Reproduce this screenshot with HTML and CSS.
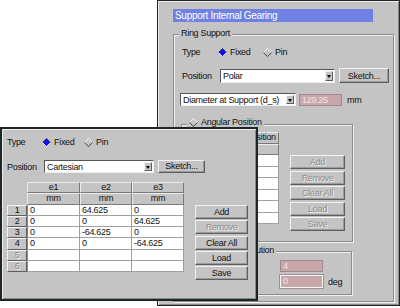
FILE: index.html
```html
<!DOCTYPE html>
<html lang="en">
<head>
  <meta charset="UTF-8" />
  <title>Support Internal Gearing</title>
  <link rel="stylesheet" href="styles.css">
</head>
<body>
  <div class="window back">
    <div class="title">Support Internal Gearing</div>

    <div class="group ring">
      <span class="legend">Ring Support</span>

      <div class="row type-row">
        <span class="label">Type</span>
        <span class="radio first">
          <svg class="dia" viewBox="0 0 10 10"><polygon points="5,0.5 9.5,5 5,9.5 0.5,5" fill="#1010e8"/><polyline points="0.5,5 5,0.5 9.5,5" fill="none" stroke="#3a3a3a"/><polyline points="9.5,5 5,9.5 0.5,5" fill="none" stroke="#f4f4f4"/></svg>
          Fixed
        </span>
        <span class="radio">
          <svg class="dia" viewBox="0 0 10 10"><polygon points="5,0.5 9.5,5 5,9.5 0.5,5" fill="#c4c4c4"/><polyline points="0.5,5 5,0.5 9.5,5" fill="none" stroke="#f8f8f8"/><polyline points="9.5,5 5,9.5 0.5,5" fill="none" stroke="#3a3a3a"/></svg>
          Pin
        </span>
      </div>

      <div class="row pos-row">
        <span class="label">Position</span>
        <div class="combo">Polar<span class="arrow"></span></div>
        <button class="btn sketch">Sketch...</button>
      </div>

      <div class="row dia-row">
        <div class="combo">Diameter at Support (d_s)<span class="arrow"></span></div>
        <div class="field">129.25</div>
        <span class="unit">mm</span>
      </div>

      <div class="group angular">
        <span class="legend">
          <svg class="dia" viewBox="0 0 10 10"><polygon points="5,0.5 9.5,5 5,9.5 0.5,5" fill="#c4c4c4"/><polyline points="0.5,5 5,0.5 9.5,5" fill="none" stroke="#f8f8f8"/><polyline points="9.5,5 5,9.5 0.5,5" fill="none" stroke="#3a3a3a"/></svg>
          Angular Position
        </span>
        <div class="row table-area">
          <div class="grid polar">
            <div class="corner"></div><div class="hd"></div><div class="hd">Position</div>
            <div class="corner"></div><div class="hd"></div><div class="hd"></div>
            <div class="rh"></div><div class="cell"></div><div class="cell"></div>
            <div class="rh"></div><div class="cell"></div><div class="cell"></div>
            <div class="rh"></div><div class="cell"></div><div class="cell"></div>
            <div class="rh"></div><div class="cell"></div><div class="cell"></div>
            <div class="rh"></div><div class="cell"></div><div class="cell"></div>
            <div class="rh"></div><div class="cell"></div><div class="cell"></div>
          </div>
          <div class="buttons">
            <button class="btn off">Add</button>
            <button class="btn off">Remove</button>
            <button class="btn off">Clear All</button>
            <button class="btn off">Load</button>
            <button class="btn off">Save</button>
          </div>
        </div>
      </div>

      <div class="group uniform">
        <span class="legend">
          <svg class="dia" viewBox="0 0 10 10"><polygon points="5,0.5 9.5,5 5,9.5 0.5,5" fill="#1010e8"/><polyline points="0.5,5 5,0.5 9.5,5" fill="none" stroke="#3a3a3a"/><polyline points="9.5,5 5,9.5 0.5,5" fill="none" stroke="#f4f4f4"/></svg>
          Uniform Distribution
        </span>
        <div class="row count-row">
          <span class="spacer"></span>
          <div class="field">4</div>
        </div>
        <div class="row angle-row">
          <span class="spacer"></span>
          <div class="field focus">0</div>
          <span class="unit">deg</span>
        </div>
      </div>
    </div>
  </div>

  <div class="window front">
    <div class="row type-row">
      <span class="label">Type</span>
      <span class="radio first">
        <svg class="dia" viewBox="0 0 10 10"><polygon points="5,0.5 9.5,5 5,9.5 0.5,5" fill="#1010e8"/><polyline points="0.5,5 5,0.5 9.5,5" fill="none" stroke="#3a3a3a"/><polyline points="9.5,5 5,9.5 0.5,5" fill="none" stroke="#f4f4f4"/></svg>
        Fixed
      </span>
      <span class="radio">
        <svg class="dia" viewBox="0 0 10 10"><polygon points="5,0.5 9.5,5 5,9.5 0.5,5" fill="#c4c4c4"/><polyline points="0.5,5 5,0.5 9.5,5" fill="none" stroke="#f8f8f8"/><polyline points="9.5,5 5,9.5 0.5,5" fill="none" stroke="#3a3a3a"/></svg>
        Pin
      </span>
    </div>

    <div class="row pos-row">
      <span class="label">Position</span>
      <div class="combo">Cartesian<span class="arrow"></span></div>
      <button class="btn sketch">Sketch...</button>
    </div>

    <div class="row table-area">
      <div class="grid coords">
        <div class="corner"></div><div class="hd">e1</div><div class="hd">e2</div><div class="hd">e3</div>
        <div class="corner"></div><div class="hd">mm</div><div class="hd">mm</div><div class="hd">mm</div>
        <div class="rh">1</div><div class="cell">0</div><div class="cell">64.625</div><div class="cell">0</div>
        <div class="rh">2</div><div class="cell">0</div><div class="cell">0</div><div class="cell">64.625</div>
        <div class="rh">3</div><div class="cell">0</div><div class="cell">-64.625</div><div class="cell">0</div>
        <div class="rh">4</div><div class="cell">0</div><div class="cell">0</div><div class="cell">-64.625</div>
        <div class="rh off">5</div><div class="cell"></div><div class="cell"></div><div class="cell"></div>
        <div class="rh off">6</div><div class="cell"></div><div class="cell"></div><div class="cell"></div>
      </div>
      <div class="buttons">
        <button class="btn">Add</button>
        <button class="btn off">Remove</button>
        <button class="btn">Clear All</button>
        <button class="btn">Load</button>
        <button class="btn">Save</button>
      </div>
    </div>
  </div>
</body>
</html>
```

FILE: styles.css
```css
:root {
  --face: #c4c4c4;
  --light: #f2f2f2;
  --shade: #5e5e5e;
  --frame: #1c2828;
}

* {
  box-sizing: border-box;
}

html, body {
  margin: 0;
  overflow: hidden;
}

body {
  position: relative;
  width: 400px;
  height: 308px;
  background: #fff;
  font-family: "Liberation Sans", Arial, sans-serif;
  font-size: 9px;
  letter-spacing: -0.3px;
  color: #111;
}

/* windows sit on the desktop */
.window {
  position: absolute;
  background: var(--face);
  border: 1px solid var(--frame);
  box-shadow: inset 1px 1px 0 #ececec, inset -1px -1px 0 #8a8a8a;
}

.back {
  left: 157px;
  top: 0;
  width: 243px;
  height: 306px;
  padding: 8px 0 0 15px;
}

.front {
  left: 0;
  top: 127px;
  width: 258px;
  height: 174px;
  border-width: 2px;
  padding: 6px 0 0 5px;
}

.title {
  width: 200px;
  height: 13px;
  line-height: 13px;
  padding-left: 2px;
  background: #6f82e4;
  color: #fff;
  font-size: 10px;
}

.row {
  display: flex;
  align-items: center;
}

/* etched group frames */
.group {
  position: relative;
  border: 1px solid #8c8c8c;
  box-shadow: 1px 1px 0 #f0f0f0, inset 1px 1px 0 #f0f0f0;
}

.legend {
  position: absolute;
  top: -8px;
  left: 5px;
  display: flex;
  align-items: center;
  gap: 3px;
  padding: 0 2px;
  line-height: 13px;
  background: var(--face);
  white-space: nowrap;
}

.ring {
  margin-top: 12px;
  width: 221px;
  height: 268px;
  padding: 10px 0 0 8px;
}

.dia {
  width: 9px;
  height: 9px;
  flex: none;
}

.radio {
  display: flex;
  align-items: center;
  gap: 3px;
}

.type-row {
  height: 14px;
}

.back .type-row .label { width: 36px; }
.back .radio.first { width: 45px; }
.front .type-row .label { width: 35px; }
.front .radio.first { width: 42px; }

.combo {
  position: relative;
  display: flex;
  align-items: center;
  background: #fff;
  border: 1px solid;
  border-color: #555 #eee #eee #555;
  padding-left: 2px;
  white-space: nowrap;
  overflow: hidden;
}

.arrow {
  position: absolute;
  right: 1px;
  top: 1px;
  bottom: 1px;
  width: 8px;
  border: 1px solid;
  border-color: var(--light) var(--shade) var(--shade) var(--light);
  background: var(--face);
}

.arrow::after {
  content: "";
  position: absolute;
  left: 1px;
  top: 3px;
  border-left: 2px solid transparent;
  border-right: 2px solid transparent;
  border-top: 3px solid #000;
}

.btn {
  height: 14px;
  padding: 0;
  border: 1px solid;
  border-color: var(--light) var(--shade) var(--shade) var(--light);
  box-shadow: inset -1px -1px 0 #9a9a9a;
  background: var(--face);
  font: inherit;
  letter-spacing: inherit;
  color: #111;
  line-height: 12px;
  text-align: center;
}

.btn.off, .rh.off {
  color: #8e8e8e;
  text-shadow: 1px 1px 0 #ececec;
}

/* back window rows */
.back .pos-row {
  margin-top: 9px;
  height: 15px;
}

.back .pos-row .label { width: 38px; }

.back .pos-row .combo {
  width: 115px;
  height: 14px;
}

.back .sketch {
  width: 50px;
  height: 15px;
  margin-left: 4px;
}

.dia-row {
  margin-top: 10px;
  margin-left: -2px;
}

.dia-row .combo {
  width: 116px;
  height: 13px;
}

.field {
  width: 43px;
  height: 12px;
  padding-left: 2px;
  line-height: 10px;
  background: #c8a6aa;
  color: #f4e6e6;
  border: 1px solid #9c8a8c;
}

.dia-row .field { margin-left: 3px; }

.field.focus {
  height: 13px;
  border-color: #f6f6f6;
  box-shadow: 0 0 0 1px #a09090;
}

.unit { margin-left: 5px; }

.angular {
  margin-top: 18px;
  margin-left: -1px;
  width: 172px;
  height: 118px;
  padding: 7px 0 0 8px;
}

.angular .legend { top: -9px; }

.table-area {
  align-items: flex-start;
  gap: 11px;
}

.buttons {
  display: flex;
  flex-direction: column;
  margin-top: 23px;
}

.angular .buttons {
  width: 55px;
  gap: 1.5px;
}

.uniform {
  margin-top: 9px;
  margin-left: -1px;
  width: 171px;
  height: 44px;
  padding: 8px 0 0 8px;
}

.spacer { width: 90px; }

.angle-row { margin-top: 3px; }

/* spreadsheet tables */
.grid {
  display: grid;
}

.polar {
  grid-template-columns: 20px 33px 36px;
  grid-auto-rows: 11.5px;
}

.coords {
  grid-template-columns: 20px 53px 52px 52px;
  grid-auto-rows: 11.25px;
}

.hd, .rh {
  border: 1px solid;
  border-color: #ececec #7a7a7a #7a7a7a #ececec;
  background: var(--face);
  text-align: center;
  line-height: 9px;
}

.rh {
  border-color: var(--light) var(--shade) var(--shade) var(--light);
}

.cell {
  background: #fff;
  border-right: 1px solid #a0a0a0;
  border-bottom: 1px solid #a0a0a0;
  padding-left: 2px;
  line-height: 10px;
  white-space: nowrap;
}

.rh + .cell {
  border-left: 1px solid #8a8a8a;
}

/* front window rows */
.front .pos-row {
  margin-top: 11px;
  height: 13px;
}

.front .pos-row .label { width: 37px; }

.front .pos-row .combo {
  width: 110px;
  height: 13px;
}

.front .sketch {
  width: 47px;
  height: 13px;
  margin-left: 4px;
  line-height: 11px;
}

.front .table-area {
  margin-top: 9px;
}

.front .buttons {
  width: 53px;
  gap: 1.25px;
}
```
